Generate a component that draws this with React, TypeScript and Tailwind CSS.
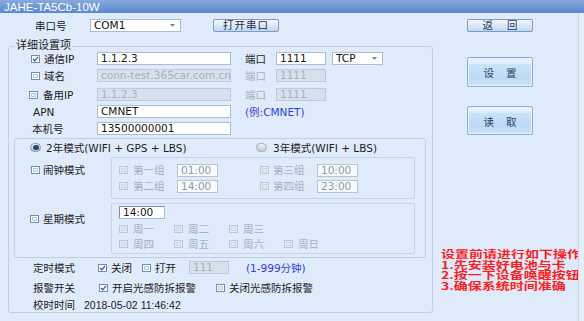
import clsx from 'clsx'

const FONT = "font-['DejaVu_Sans','Noto_Sans_CJK_SC',sans-serif]"

function Check({ checked = false, disabled = false }: { checked?: boolean; disabled?: boolean }) {
  return (
    <span
      className={clsx(
        'flex h-[8px] w-[9px] shrink-0 items-center justify-center border',
        disabled ? 'border-[#b9c7d7] bg-[#e4ebf4]' : 'border-[#6b8dc2] bg-white'
      )}
    >
      {checked ? (
        <svg viewBox="0 0 8 7" className="h-[6px] w-[7px]">
          <path d="M1 3.5 L3.2 5.6 L7 1" stroke="#2c54a8" strokeWidth="1.5" fill="none" />
        </svg>
      ) : (
        <span
          className={clsx(
            'h-[4px] w-[5px] border',
            disabled ? 'border-[#cdd7e3]' : 'border-[#b6cae5] bg-[#eef4fb]'
          )}
        />
      )}
    </span>
  )
}

function Radio({ on = false }: { on?: boolean }) {
  return on ? (
    <span className="flex h-[9px] w-[11px] shrink-0 items-center justify-center rounded-full border border-[#8796a8] bg-gradient-to-b from-[#eef1f4] to-[#b7c2ce]">
      <span className="h-[5px] w-[6px] rounded-full bg-[#23467c]" />
    </span>
  ) : (
    <span className="h-[9px] w-[11px] shrink-0 rounded-full border border-[#a2acb8] bg-gradient-to-b from-[#f2f4f6] to-[#c4cbd3]" />
  )
}

function Field({
  value,
  className,
  disabled = false,
  muted = false,
}: {
  value: string
  className: string
  disabled?: boolean
  muted?: boolean
}) {
  return (
    <div
      className={clsx(
        'flex h-[13px] shrink-0 items-center overflow-hidden border pl-[3px] leading-none whitespace-nowrap',
        disabled
          ? 'border-[#bccbdc] bg-[#d6e1ed] text-[#a3b1c1]'
          : muted
            ? 'border-[#b5c3d2] bg-[#f8fafc] text-[#8e9aa8]'
            : 'border-[#a8bdd6] bg-white text-[#151515]',
        className
      )}
    >
      {value}
    </div>
  )
}

function Dropdown({ value, className }: { value: string; className: string }) {
  return (
    <div
      className={clsx(
        'flex h-[13px] shrink-0 items-center justify-between border border-[#a8bdd6] bg-white pr-[5px] pl-[3px] leading-none text-[#111]',
        className
      )}
    >
      <span>{value}</span>
      <svg viewBox="0 0 5 3" className="h-[3px] w-[5px]">
        <path d="M0 0 H5 L2.5 3 Z" fill="#6f84a3" />
      </svg>
    </div>
  )
}

function SmallButton({ children, className }: { children: React.ReactNode; className?: string }) {
  return (
    <button
      className={clsx(
        'flex h-[13px] w-[66px] shrink-0 items-center justify-center rounded-[2px] border border-[#7c9bc6] bg-gradient-to-b from-[#f4f8fe] via-[#dae8f8] to-[#c2d8f1] leading-none text-[#1e2e4e]',
        className
      )}
    >
      {children}
    </button>
  )
}

function BigButton({ a, b, className }: { a: string; b: string; className?: string }) {
  return (
    <button
      className={clsx(
        'flex w-[66px] items-center justify-center gap-[12px] rounded-[2px] border border-[#8cb0dc] bg-[linear-gradient(to_bottom,#eef5fd_0%,#dfedfb_20%,#c9e2f8_24%,#bcdaf5_75%,#cfe6fa_100%)] pt-[2px] text-[10.5px] text-[#2a3b63] shadow-[inset_0_0_0_1px_#e6f1fc]',
        className
      )}
    >
      <span>{a}</span>
      <span>{b}</span>
    </button>
  )
}

export default function App() {
  const grey = 'text-[#a4b2c2]'

  return (
    <div
      className={clsx(
        'flex h-[321px] w-[584px] flex-col overflow-hidden bg-[#dfeafa] text-[10.5px] leading-[12px] text-[#1c1c1c]',
        FONT
      )}
    >
      {/* заголовок окна */}
      <div className="h-[13px] shrink-0 overflow-hidden bg-gradient-to-b from-[#88abdd] to-[#5987cf] pl-[4px] font-['Liberation_Sans',sans-serif] text-[11.5px] leading-[14px] text-white">
        JAHE-TA5Cb-10W
      </div>

      <div className="flex flex-1">
        {/* левая часть */}
        <div className="w-[433px] shrink-0">
          <div className="mt-[6px] flex h-[13px] items-center">
            <span className="ml-[35px] w-[55px]">串口号</span>
            <Dropdown value="COM1" className="w-[91px]" />
            <SmallButton className="ml-[32px] tracking-[1px]">打开串口</SmallButton>
          </div>

          <div className="relative mt-[14px] ml-[8px] h-[267px] w-[425px] rounded-[3px] border border-[#bfd0e6]">
            <span className="absolute -top-[7px] left-[6px] bg-[#dfeafa] px-[1px] text-[11px]">详细设置项</span>

            {/* 通信IP */}
            <div className="mt-[5px] flex h-[13px] items-center">
              <div className="flex w-[88px] items-center gap-[4px] pl-[22px]">
                <Check checked />
                <span>通信IP</span>
              </div>
              <Field value="1.1.2.3" className="w-[134px]" />
              <span className="ml-[14px] w-[31px]">端口</span>
              <Field value="1111" className="w-[50px]" />
              <Dropdown value="TCP" className="ml-[6px] w-[51px]" />
            </div>

            {/* 域名 */}
            <div className="mt-[4px] flex h-[13px] items-center">
              <div className="flex w-[88px] items-center gap-[4px] pl-[22px]">
                <Check />
                <span>域名</span>
              </div>
              <Field value="conn-test.365car.com.cn" className="w-[134px]" disabled />
              <span className={clsx('ml-[14px] w-[31px]', grey)}>端口</span>
              <Field value="1111" className="w-[50px]" disabled />
            </div>

            {/* 备用IP */}
            <div className="mt-[6px] flex h-[13px] items-center">
              <div className="flex w-[88px] items-center gap-[5px] pl-[20px]">
                <Check />
                <span>备用IP</span>
              </div>
              <Field value="1.1.2.3" className="w-[134px]" disabled />
              <span className={clsx('ml-[14px] w-[31px]', grey)}>端口</span>
              <Field value="1111" className="w-[50px]" disabled />
            </div>

            {/* APN */}
            <div className="mt-[4px] flex h-[13px] items-center">
              <span className="w-[88px] pl-[24px]">APN</span>
              <Field value="CMNET" className="w-[134px]" />
              <span className="ml-[14px] text-[#2f3de6]">(例:CMNET)</span>
            </div>

            {/* 本机号 */}
            <div className="mt-[4px] flex h-[13px] items-center">
              <span className="w-[88px] pl-[23px]">本机号</span>
              <Field value="13500000001" className="w-[134px]" />
            </div>

            {/* режимы */}
            <div className="mt-[3px] ml-[5px] h-[120px] w-[412px] rounded-[3px] border border-[#bfd0e6]">
              <div className="mt-[3px] flex h-[11px] items-center">
                <div className="flex w-[241px] items-center gap-[5px] pl-[15px]">
                  <Radio on />
                  <span>2年模式(WIFI + GPS + LBS)</span>
                </div>
                <div className="flex items-center gap-[6px]">
                  <Radio />
                  <span>3年模式(WIFI + LBS)</span>
                </div>
              </div>

              {/* 闹钟模式 */}
              <div className="mt-[4px] flex">
                <div className="flex w-[96px] items-center gap-[3px] self-start pt-[7px] pl-[16px]">
                  <Check />
                  <span>闹钟模式</span>
                </div>
                <div className="h-[42px] w-[304px] rounded-[2px] border border-[#c3d3e8] pl-[7px]">
                  {[
                    ['第一组', '01:00', '第三组', '10:00'],
                    ['第二组', '14:00', '第四组', '23:00'],
                  ].map((r, i) => (
                    <div key={r[0]} className={clsx('flex h-[12px] items-center', i === 0 ? 'mt-[6px]' : 'mt-[4px]')}>
                      <div className={clsx('flex w-[58px] items-center gap-[5px]', grey)}>
                        <Check disabled />
                        <span>{r[0]}</span>
                      </div>
                      <Field value={r[1]} className="h-[12px] w-[41px]" muted />
                      <div className={clsx('ml-[42px] flex w-[57px] items-center gap-[4px]', grey)}>
                        <Check disabled />
                        <span>{r[2]}</span>
                      </div>
                      <Field value={r[3]} className="h-[12px] w-[41px]" muted />
                    </div>
                  ))}
                </div>
              </div>

              {/* 星期模式 */}
              <div className="mt-[4px] flex">
                <div className="flex w-[96px] items-center gap-[4px] self-start pt-[10px] pl-[15px]">
                  <Check />
                  <span>星期模式</span>
                </div>
                <div className="h-[51px] w-[304px] rounded-[2px] border border-[#c3d3e8] pl-[7px]">
                  <Field value="14:00" className="mt-[2px] h-[12px] w-[46px] border-t-[#7f8fa3] border-l-[#7f8fa3] text-[#555]" />
                  {[
                    ['周一', '周二', '周三'],
                    ['周四', '周五', '周六', '周日'],
                  ].map((r, i) => (
                    <div key={r[0]} className={clsx('flex h-[12px] items-center', i === 0 ? 'mt-[4px]' : 'mt-[3px]')}>
                      {r.map((d) => (
                        <div key={d} className={clsx('flex w-[55px] items-center gap-[5px]', grey)}>
                          <Check disabled />
                          <span>{d}</span>
                        </div>
                      ))}
                    </div>
                  ))}
                </div>
              </div>
            </div>

            {/* 定时模式 */}
            <div className="mt-[3px] flex h-[13px] items-center">
              <span className="w-[89px] pl-[24px]">定时模式</span>
              <div className="flex w-[44px] items-center gap-[4px]">
                <Check checked />
                <span>关闭</span>
              </div>
              <div className="flex w-[47px] items-center gap-[4px]">
                <Check />
                <span>打开</span>
              </div>
              <Field value="111" className="w-[40px]" disabled />
              <span className="ml-[17px] text-[#2f3de6]">(1-999分钟)</span>
            </div>

            {/* 报警开关 */}
            <div className="mt-[8px] flex h-[12px] items-center">
              <span className="w-[90px] pl-[24px]">报警开关</span>
              <div className="flex w-[117px] items-center gap-[4px]">
                <Check checked />
                <span>开启光感防拆报警</span>
              </div>
              <div className="flex items-center gap-[4px]">
                <Check />
                <span>关闭光感防拆报警</span>
              </div>
            </div>

            {/* 校时时间 */}
            <div className="mt-[5px] flex h-[12px] items-center">
              <span className="w-[75px] pl-[24px]">校时时间</span>
              <span className="font-['Liberation_Sans',sans-serif]">2018-05-02 11:46:42</span>
            </div>
          </div>
        </div>

        {/* правая часть */}
        <div className="w-[145px] shrink-0">
          <SmallButton className="mt-[6px] ml-[34px] gap-[14px] text-[#2a3b63]">
            <span>返</span>
            <span>回</span>
          </SmallButton>
          <BigButton a="设" b="置" className="mt-[25px] ml-[34px] h-[30px]" />
          <BigButton a="读" b="取" className="mt-[19px] ml-[34px] h-[29px]" />

          <div className="mt-[114px] ml-[8px] w-[170px] origin-top scale-y-[0.7] font-['Noto_Sans_CJK_SC',sans-serif] text-[14px] leading-[15px] font-bold whitespace-nowrap text-[#ff1c1c]">
            <div>设置前请进行如下操作：</div>
            <div>1.先安装好电池与卡</div>
            <div>2.按一下设备唤醒按钮</div>
            <div>3.确保系统时间准确</div>
          </div>
        </div>

        <div className="relative z-10 w-[6px] shrink-0 border-l border-[#c4d5ea] bg-[#e6eefa]" />
      </div>
    </div>
  )
}
